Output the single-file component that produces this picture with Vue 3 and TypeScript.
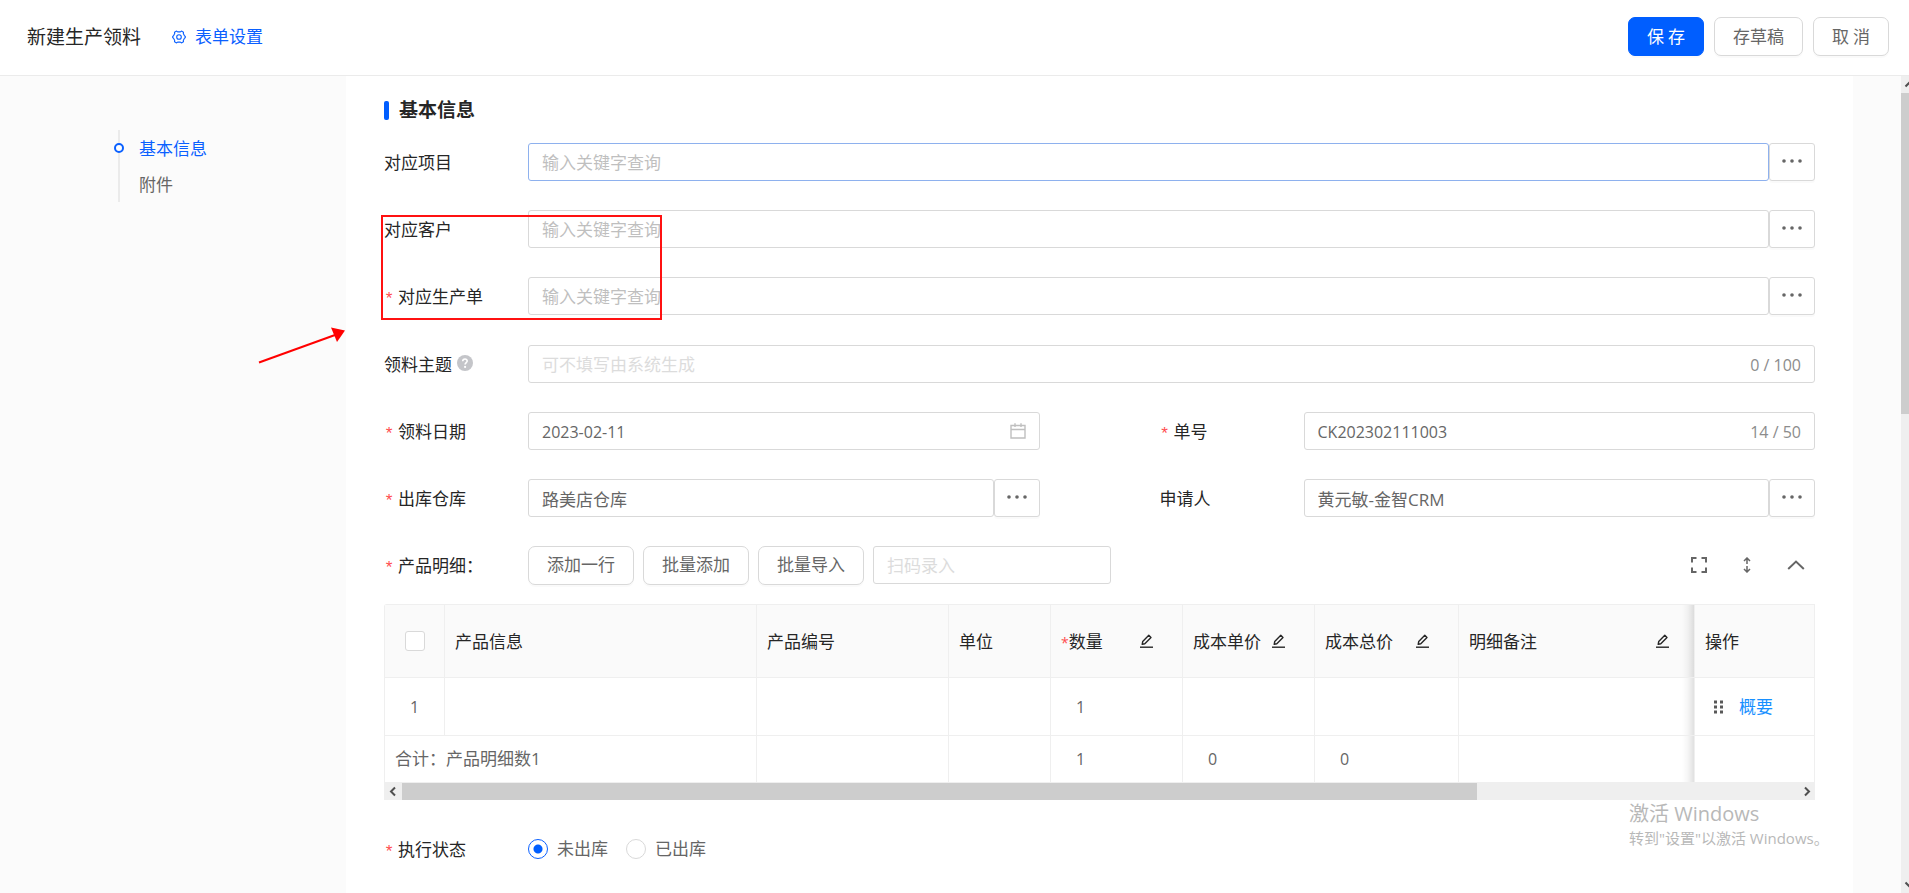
<script setup lang="ts">
import { ref } from 'vue'

interface Lookup {
  id: string
  label: string
  required: boolean
  focused: boolean
}

interface Column {
  title: string
  cls: string
  required?: boolean
  editable?: boolean
}

const lookups: Lookup[] = [
  { id: 'project', label: '对应项目', required: false, focused: true },
  { id: 'customer', label: '对应客户', required: false, focused: false },
  { id: 'order', label: '对应生产单', required: true, focused: false },
]

const columns: Column[] = [
  { title: '产品信息', cls: 'c-info' },
  { title: '产品编号', cls: 'c-code' },
  { title: '单位', cls: 'c-unit' },
  { title: '数量', cls: 'c-num', required: true, editable: true },
  { title: '成本单价', cls: 'c-num', editable: true },
  { title: '成本总价', cls: 'c-total', editable: true },
  { title: '明细备注', cls: 'c-note', editable: true },
]

const rowActions: string[] = ['添加一行', '批量添加', '批量导入']
const date = ref('2023-02-11')
const serial = ref('CK202302111003')
const warehouse = ref('路美店仓库')
const applicant = ref('黄元敏-金智CRM')
const subject = ref('')
const status = ref('pending')
</script>

<template>
  <div class="page">
    <header class="topbar">
      <h1 class="page-title">新建生产领料</h1>
      <a href="#" class="settings">
        <svg width="14" height="14" viewBox="0 0 14 14" fill="none" stroke="currentColor" stroke-width="1.1">
          <path d="M4.6 1.1 5.6 1.9H8.4L9.4 1.1 11.5 2.3 11.3 3.6 12.6 5.9 13.3 6.2V7.8L12.6 8.1 11.3 10.4 11.5 11.7 9.4 12.9 8.4 12.1H5.6L4.6 12.9 2.5 11.7 2.7 10.4 1.4 8.1.7 7.8V6.2L1.4 5.9 2.7 3.6 2.5 2.3Z" stroke-linejoin="round" />
          <circle cx="7" cy="7" r="2.3" />
        </svg>
        表单设置
      </a>
      <div class="top-actions">
        <button type="button" class="btn primary spaced">保存</button>
        <button type="button" class="btn">存草稿</button>
        <button type="button" class="btn spaced">取消</button>
      </div>
    </header>

    <div class="body">
      <aside class="side">
        <nav class="anchor">
          <a href="#basic" class="anchor-link active">基本信息</a>
          <a href="#files" class="anchor-link">附件</a>
        </nav>
      </aside>

      <main class="panel">
        <h2 id="basic" class="section-title">基本信息</h2>

        <div class="rows">
          <div v-for="f in lookups" :key="f.id" class="field">
            <label :for="f.id"><i v-if="f.required">*</i>{{ f.label }}</label>
            <div class="group">
              <div class="box" :class="{ focused: f.focused }">
                <input :id="f.id" type="text" placeholder="输入关键字查询" />
              </div>
              <button type="button" class="more" aria-label="选择">
                <svg width="20" height="4" viewBox="0 0 20 4"><circle cx="2" cy="2" r="1.8" /><circle cx="10" cy="2" r="1.8" /><circle cx="18" cy="2" r="1.8" /></svg>
              </button>
            </div>
          </div>
        </div>

        <div class="rows second">
          <div class="field">
            <label for="subject">领料主题
              <svg class="help" width="16" height="16" viewBox="0 0 16 16">
                <circle cx="8" cy="8" r="8" fill="#c4c5c9" />
                <path d="M5.7 6.3C5.8 3.3 10.3 3.4 10.2 6.1 10.2 7.6 8.1 7.8 8.1 9.6" fill="none" stroke="#fff" stroke-width="1.6" />
                <circle cx="8.1" cy="11.9" r="1.1" fill="#fff" />
              </svg>
            </label>
            <div class="box pale">
              <input id="subject" v-model="subject" type="text" placeholder="可不填写由系统生成" />
              <span class="count">0 / 100</span>
            </div>
          </div>

          <div class="pair">
            <div class="field">
              <label for="date"><i>*</i>领料日期</label>
              <div class="box">
                <input id="date" v-model="date" class="latin" type="text" />
                <svg class="calendar" width="16" height="16" viewBox="0 0 16 16" fill="none" stroke="#bfbfbf">
                  <path d="M1 2.5H15V15H1ZM1 6.5H15" stroke-width="1.4" />
                  <path d="M5 .3V4M11 .3V4" stroke-width="1.4" />
                </svg>
              </div>
            </div>
            <div class="field">
              <label for="serial"><i>*</i>单号</label>
              <div class="box">
                <input id="serial" v-model="serial" class="latin" type="text" />
                <span class="count">14 / 50</span>
              </div>
            </div>
          </div>

          <div class="pair">
            <div class="field">
              <label for="warehouse"><i>*</i>出库仓库</label>
              <div class="group">
                <div class="box"><input id="warehouse" v-model="warehouse" type="text" /></div>
                <button type="button" class="more" aria-label="选择仓库">
                  <svg width="20" height="4" viewBox="0 0 20 4"><circle cx="2" cy="2" r="1.8" /><circle cx="10" cy="2" r="1.8" /><circle cx="18" cy="2" r="1.8" /></svg>
                </button>
              </div>
            </div>
            <div class="field">
              <label for="applicant">申请人</label>
              <div class="group">
                <div class="box"><input id="applicant" v-model="applicant" type="text" /></div>
                <button type="button" class="more" aria-label="选择申请人">
                  <svg width="20" height="4" viewBox="0 0 20 4"><circle cx="2" cy="2" r="1.8" /><circle cx="10" cy="2" r="1.8" /><circle cx="18" cy="2" r="1.8" /></svg>
                </button>
              </div>
            </div>
          </div>

          <div class="field">
            <label for="scan"><i>*</i>产品明细：</label>
            <div class="toolbar">
              <button v-for="a in rowActions" :key="a" type="button" class="btn">{{ a }}</button>
              <div class="box pale scan"><input id="scan" type="text" placeholder="扫码录入" /></div>
              <div class="tools">
                <button type="button" class="tool" aria-label="全屏">
                  <svg width="16" height="16" viewBox="0 0 16 16"><path d="M1 5.5V1H5.5M10.5 1H15V5.5M15 10.5V15H10.5M5.5 15H1V10.5" /></svg>
                </button>
                <button type="button" class="tool" aria-label="行高">
                  <svg width="16" height="16" viewBox="0 0 16 16"><path d="M8 1V7M8 9V15M5 4 8 1 11 4M5 12 8 15 11 12" stroke-width="1.5" /></svg>
                </button>
                <button type="button" class="tool" aria-label="收起">
                  <svg width="18" height="16" viewBox="0 0 18 16"><path d="M1.2 12 9 4.6 16.8 12" /></svg>
                </button>
              </div>
            </div>
          </div>
        </div>

        <div class="grid-wrap">
          <table class="grid">
            <thead>
              <tr>
                <th class="c-check"><input type="checkbox" class="check" aria-label="全选" /></th>
                <th v-for="c in columns" :key="c.title" :class="c.cls">
                  <div class="th">
                    <span><b v-if="c.required">*</b>{{ c.title }}</span>
                    <svg v-if="c.editable" width="13" height="14" viewBox="0 0 13 14" fill="none" stroke="currentColor">
                      <path d="M0 13.2H13" stroke-width="1.4" />
                      <path d="M2.2 10.3 2.7 7.6 8.8 1.3 11 3.4 4.8 9.7Z" stroke-width="1.4" stroke-linejoin="round" />
                    </svg>
                  </div>
                </th>
                <th class="c-op"><div class="th">操作</div></th>
              </tr>
            </thead>
            <tbody>
              <tr>
                <td class="index">1</td>
                <td></td><td></td><td></td>
                <td class="num">1</td>
                <td></td><td></td><td class="c-note"></td>
                <td class="c-op">
                  <div class="ops">
                    <svg width="9" height="14" viewBox="0 0 9 14">
                      <path d="M0 .5h3v3H0zM6 .5h3v3H6zM0 5.5h3v3H0zM6 5.5h3v3H6zM0 10.5h3v3H0zM6 10.5h3v3H6z" fill="#595959" />
                    </svg>
                    <a href="#">概要</a>
                  </div>
                </td>
              </tr>
            </tbody>
            <tfoot>
              <tr>
                <td colspan="2" class="sum">合计：产品明细数1</td>
                <td></td><td></td>
                <td class="num">1</td>
                <td class="num">0</td>
                <td class="num">0</td>
                <td class="c-note"></td>
                <td class="c-op"></td>
              </tr>
            </tfoot>
          </table>
          <div class="hbar">
            <svg width="18" height="17" viewBox="0 0 18 17"><path d="M11 4.5 7 8.5 11 12.5" /></svg>
            <div class="htrack"><div class="hthumb"></div></div>
            <svg width="17" height="17" viewBox="0 0 17 17"><path d="M7 4.5 11 8.5 7 12.5" /></svg>
          </div>
        </div>

        <div class="field status">
          <span id="status-label" class="label"><i>*</i>执行状态</span>
          <div class="radios" role="radiogroup" aria-labelledby="status-label">
            <label><input v-model="status" type="radio" name="status" value="pending" />未出库</label>
            <label><input v-model="status" type="radio" name="status" value="done" />已出库</label>
          </div>
        </div>
      </main>

      <div class="vbar">
        <svg width="17" height="17" viewBox="0 0 17 17"><path d="M4.5 10.5 8.5 6.5 12.5 10.5" /></svg>
        <div class="vtrack"><div class="vthumb"></div></div>
        <svg width="17" height="17" viewBox="0 0 17 17"><path d="M4.5 6.5 8.5 10.5 12.5 6.5" /></svg>
      </div>
    </div>

    <div class="mark"></div>
    <svg class="arrow" width="90" height="40" viewBox="0 0 90 40">
      <path d="M2 35.500 78 8" stroke="#f00" stroke-width="2" />
      <path d="M74 .5 88 3.500 80 15Z" fill="#f00" />
    </svg>
    <div class="watermark">
      <div class="wm-title">激活 Windows</div>
      <div class="wm-text">转到"设置"以激活 Windows。</div>
    </div>
  </div>
</template>

<style>
body {
  margin: 0;
}
</style>

<style scoped>
*,
*::before {
  box-sizing: border-box;
}
.page {
  position: relative;
  display: flex;
  flex-direction: column;
  height: 100vh;
  overflow: hidden;
  background: #fff;
  color: #262626;
  font-family: "Open Sans", "Noto Sans CJK SC", sans-serif;
  font-size: 17px;
  line-height: 24px;
}
button,
input {
  font: inherit;
  color: #666;
}
a {
  text-decoration: none;
}
svg {
  display: block;
  flex: none;
}
i {
  display: block;
  flex: none;
  width: 14px;
  padding-top: 6px;
  color: #ff4d4f;
  font-family: "Liberation Mono", monospace;
  font-style: normal;
}

.topbar {
  display: flex;
  align-items: center;
  flex: none;
  height: 76px;
  padding: 0 20px 2px 27px;
  border-bottom: 1px solid #ebebeb;
}
.page-title {
  margin: 0;
  font-size: 19px;
  font-weight: 400;
}
.settings {
  display: flex;
  align-items: center;
  gap: 9px;
  margin-left: 31px;
  color: #0a60ff;
}
.top-actions {
  display: flex;
  gap: 10px;
  margin-left: auto;
}
.btn {
  height: 39px;
  padding: 0 18px;
  border: 1px solid #d9d9d9;
  border-radius: 7px;
  background: #fff;
  box-shadow: 0 2px 0 rgba(0, 0, 0, 0.02);
  white-space: nowrap;
}
.btn.spaced {
  width: 76px;
  letter-spacing: 4px;
  text-indent: 4px;
  padding: 0;
}
.btn.primary {
  border-color: #005eff;
  background: #005eff;
  color: #fff;
}

.body {
  display: flex;
  flex: 1;
  min-height: 0;
  background: #fbfbfb;
}
.side {
  flex: none;
  width: 346px;
  padding: 54px 0 0 118px;
}
.anchor {
  display: flex;
  flex-direction: column;
  align-items: flex-start;
  border-left: 2px solid #ebebeb;
}
.anchor-link {
  position: relative;
  height: 36px;
  padding-left: 19px;
  line-height: 38px;
  color: #666;
}
.anchor-link.active {
  color: #0a60ff;
}
.anchor-link.active::before {
  content: "";
  position: absolute;
  left: -6px;
  top: 13px;
  width: 10px;
  height: 10px;
  border: 2px solid #0a60ff;
  border-radius: 50%;
  background: #fff;
}
.panel {
  flex: 1;
  min-width: 0;
  margin-right: 48px;
  padding: 21px 38px 0;
  background: #fff;
}
.section-title {
  display: flex;
  align-items: center;
  gap: 10px;
  margin: 0 0 20px;
  font-size: 19px;
  line-height: 26px;
  font-weight: 700;
}
.section-title::before {
  content: "";
  width: 5px;
  height: 19px;
  border-radius: 2px;
  background: #005eff;
}
.rows {
  display: flex;
  flex-direction: column;
  gap: 29px;
}
.rows.second {
  margin-top: 30px;
}
.pair {
  display: grid;
  grid-template-columns: 1fr 1fr;
  gap: 120px;
}
.field {
  display: flex;
  align-items: center;
  height: 38px;
}
.field > label,
.label {
  display: flex;
  align-items: center;
  flex: none;
  width: 144px;
  padding-top: 2px;
}
.help {
  margin: 0 0 4px 5px;
}
.group {
  display: flex;
  flex: 1;
  min-width: 0;
}
.box {
  display: flex;
  align-items: center;
  flex: 1;
  min-width: 0;
  height: 38px;
  padding: 0 13px;
  border: 1px solid #d9d9d9;
  border-radius: 3px;
  background: #fff;
}
.box.focused {
  border-color: #8eb1ee;
}
.box input {
  flex: 1;
  min-width: 0;
  width: 100%;
  height: 30px;
  padding: 0;
  border: 0;
  outline: 0;
  background: none;
}
.box input::placeholder {
  color: #bfbfbf;
  opacity: 1;
}
.box.pale input::placeholder {
  color: #dcdcdc;
}
.box .latin,
.count {
  padding-top: 2px;
  font-size: 16px;
}
.count {
  color: #8c8c8c;
}
.more {
  display: flex;
  align-items: center;
  justify-content: center;
  flex: none;
  width: 46px;
  height: 38px;
  padding: 0 0 2px;
  border: 1px solid #d9d9d9;
  border-radius: 3px;
  background: #fff;
  box-shadow: 0 2px 0 rgba(0, 0, 0, 0.02);
  fill: #666;
}
.toolbar {
  display: flex;
  align-items: center;
  gap: 9px;
  flex: 1;
}
.box.scan {
  flex: none;
  width: 238px;
}
.tools {
  display: flex;
  align-items: center;
  gap: 32px;
  margin: 0 10px 0 auto;
}
.tool {
  display: flex;
  padding: 0;
  border: 0;
  background: none;
  fill: none;
  stroke: #666;
  stroke-width: 2;
}

.grid-wrap {
  margin-top: 20px;
}
.grid {
  width: 100%;
  border-collapse: separate;
  border-spacing: 0;
  table-layout: fixed;
  border-top: 1px solid #efefef;
  border-left: 1px solid #efefef;
  border-radius: 3px 0 0;
}
th,
td {
  padding: 0;
  border-right: 1px solid #efefef;
  border-bottom: 1px solid #efefef;
  font-weight: 400;
  text-align: left;
}
th {
  height: 73px;
  background-color: #fafafa;
}
tbody td {
  height: 58px;
  color: #666;
}
tfoot td {
  height: 47px;
  color: #666;
}
.c-check { width: 60px; }
.c-info { width: 312px; }
.c-code { width: 192px; }
.c-unit { width: 102px; }
.c-num { width: 132px; }
.c-total { width: 144px; }
.c-op { width: 120px; }
.c-note {
  background-image: linear-gradient(to left, rgba(0, 0, 0, 0.12), rgba(0, 0, 0, 0.04) 6px, transparent 12px);
}
.th {
  display: flex;
  align-items: center;
  justify-content: space-between;
  padding: 2px 29px 0 10px;
  white-space: nowrap;
}
.th svg {
  margin-bottom: 2px;
}
.c-note .th {
  padding-right: 25px;
}
.th b {
  color: #ff4d4f;
  font-size: 14px;
  font-weight: 400;
}
.check,
.radios input {
  appearance: none;
  width: 20px;
  height: 20px;
  margin: 0;
  border: 1px solid #d9d9d9;
  border-radius: 3px;
  background: #fff;
}
.check {
  display: block;
  margin: 0 auto;
}
.index {
  text-align: center;
  font-size: 16px;
}
.num {
  padding-left: 25px;
  font-size: 16px;
}
.sum {
  padding-left: 10px;
}
.ops {
  display: flex;
  align-items: center;
  gap: 16px;
  padding-left: 19px;
}
.ops a {
  color: #1890ff;
}

.hbar {
  display: flex;
  height: 17px;
  background: #efefef;
}
.hbar svg,
.vbar svg {
  fill: none;
  stroke: #505050;
  stroke-width: 2;
}
.htrack {
  flex: 1;
}
.hthumb {
  width: 77%;
  height: 17px;
  background: #cdcdcd;
}
.status {
  margin-top: 30px;
}
.radios {
  display: flex;
  gap: 18px;
  color: #666;
}
.radios label {
  display: flex;
  align-items: center;
  gap: 9px;
}
.radios input {
  border-radius: 50%;
}
.radios input:checked {
  border-color: #0a60ff;
  background: radial-gradient(circle, #005eff 0 4px, #fff 5px);
}
.vbar {
  display: flex;
  flex-direction: column;
  flex: none;
  width: 8px;
  overflow: hidden;
  background: #efefef;
}
.vtrack {
  flex: 1;
}
.vthumb {
  height: 41%;
  background: #cdcdcd;
}

.mark {
  position: absolute;
  left: 381px;
  top: 215px;
  width: 281px;
  height: 105px;
  border: 2px solid #f11;
  pointer-events: none;
}
.arrow {
  position: absolute;
  left: 257px;
  top: 327px;
  fill: none;
}
.watermark {
  position: absolute;
  right: 84px;
  bottom: 44px;
  width: 196px;
  color: #b8b8b8;
  white-space: nowrap;
  pointer-events: none;
}
.wm-title {
  font-size: 20px;
  line-height: 26px;
}
.wm-text {
  font-size: 15px;
  line-height: 22px;
}
</style>
